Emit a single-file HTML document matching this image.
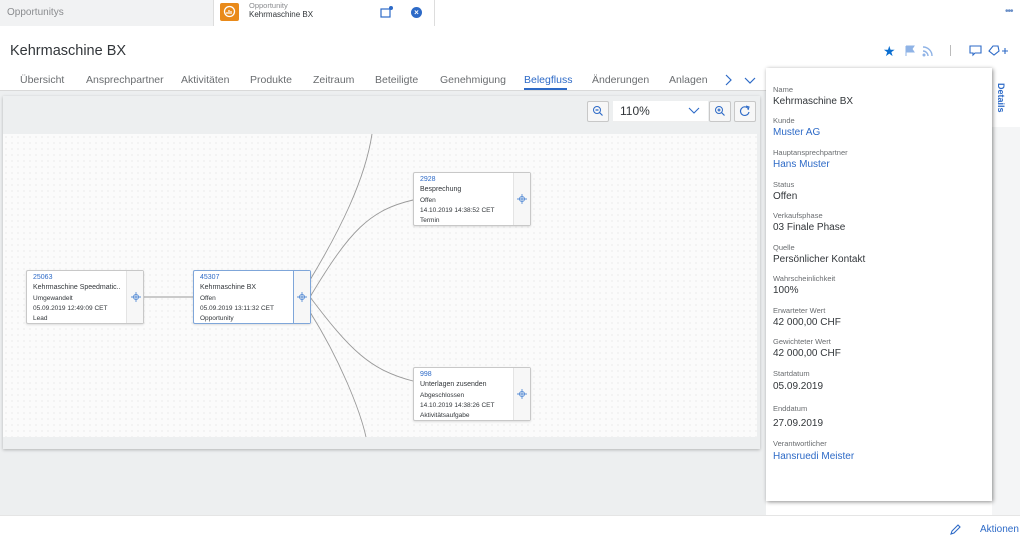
<!DOCTYPE html>
<html><head><meta charset="utf-8"><style>
*{margin:0;padding:0;box-sizing:border-box}
body{width:1020px;height:542px;overflow:hidden;background:#fff;font-family:"Liberation Sans",Arial,sans-serif;position:relative;color:#32363a}
.a{position:absolute;white-space:nowrap}
.tab{position:absolute;top:74px;font-size:10.5px;color:#6a6d70}
.node{position:absolute;width:118px;height:54px;background:#fff;border:1px solid #c8c8c8;border-radius:2px;box-shadow:0 1px 2px rgba(0,0,0,.12)}
.node .side{position:absolute;right:0;top:0;bottom:0;width:17px;background:#f7f7f7;border-left:1px solid #e4e4e4}
.node .t{position:absolute;left:6px;font-size:6.5px;color:#32363a;white-space:nowrap}
.lbl{position:absolute;left:773px;font-size:7.5px;color:#6a6d70}
.val{position:absolute;left:773px;font-size:10px;color:#32363a}
.lnk{color:#2d6ac7}
.btn{position:absolute;top:101px;width:22px;height:21px;background:#f7f7f7;border:1px solid #c8c8c8;border-radius:2px}
</style></head><body>
<!-- top shell bar -->
<div class="a" style="left:0;top:0;width:213px;height:26px;background:#f1f2f3"></div>
<div class="a" style="left:7px;top:7px;font-size:10px;color:#8a8c8f">Opportunitys</div>
<div class="a" style="left:213px;top:0;width:222px;height:26px;background:#fff;border-left:1px solid #ddd;border-right:1px solid #ddd"></div>
<div class="a" style="left:220px;top:3px;width:19px;height:18px;background:#e98a1a;border-radius:2px"></div>
<svg class="a" style="left:223px;top:5px" width="13" height="13" viewBox="0 0 13 13"><circle cx="6.5" cy="6.5" r="5" fill="none" stroke="#fff" stroke-width="1.3"/><path d="M4 9V7M6 9V5M8 9V6" stroke="#fff" stroke-width="1.2"/></svg>
<div class="a" style="left:249px;top:1px;font-size:7.5px;color:#8a8c8f">Opportunity</div>
<div class="a" style="left:249px;top:10px;font-size:8px;color:#32363a">Kehrmaschine BX</div>
<svg class="a" style="left:380px;top:5px" width="14" height="14" viewBox="0 0 14 14"><rect x="1" y="4" width="9" height="8" fill="none" stroke="#2d6ac7" stroke-width="1.2"/><circle cx="11" cy="3" r="2" fill="#2d6ac7"/></svg>
<div class="a" style="left:411px;top:7px;width:11px;height:11px;border-radius:50%;background:#2d6ac7;color:#fff;font-size:8px;line-height:11px;text-align:center;font-weight:bold">×</div>
<div class="a" style="left:1005px;top:6px;font-size:10px;color:#6a8fc7;letter-spacing:-1px">•••</div>
<!-- header -->
<div class="a" style="left:10px;top:43px;font-size:14.5px;color:#32363a">Kehrmaschine BX</div>
<div class="a" style="left:883px;top:43px;font-size:14px;color:#0a6ed1">★</div>
<svg class="a" style="left:904px;top:45px" width="12" height="12" viewBox="0 0 12 12"><path d="M2 1V11M2 1H10L8 4L10 7H2" fill="#8fb3e6" stroke="#8fb3e6"/></svg>
<svg class="a" style="left:922px;top:45px" width="12" height="12" viewBox="0 0 12 12"><circle cx="2" cy="10" r="1.5" fill="#8fb3e6"/><path d="M1 6A5 5 0 0 1 6 11M1 2A9 9 0 0 1 10 11" fill="none" stroke="#8fb3e6" stroke-width="1.4"/></svg>
<div class="a" style="left:950px;top:45px;width:1px;height:11px;background:#bbb"></div>
<svg class="a" style="left:969px;top:45px" width="13" height="12" viewBox="0 0 13 12"><path d="M1 1H12V8H6L4 10V8H1Z" fill="none" stroke="#2d6ac7" stroke-width="1.1"/></svg>
<svg class="a" style="left:988px;top:45px" width="22" height="12" viewBox="0 0 22 12"><path d="M1 6L5 1H10L11 6L6 10Z" fill="none" stroke="#2d6ac7" stroke-width="1.1"/><path d="M17 3V9M14 6H20" stroke="#2d6ac7" stroke-width="1.1"/></svg>
<!-- tabs -->
<div class="tab" style="left:20px">Übersicht</div>
<div class="tab" style="left:86px">Ansprechpartner</div>
<div class="tab" style="left:181px">Aktivitäten</div>
<div class="tab" style="left:250px">Produkte</div>
<div class="tab" style="left:313px">Zeitraum</div>
<div class="tab" style="left:375px">Beteiligte</div>
<div class="tab" style="left:440px">Genehmigung</div>
<div class="tab" style="left:524px;color:#2d6ac7">Belegfluss</div>
<div class="a" style="left:524px;top:88px;width:43px;height:2px;background:#2d6ac7"></div>
<div class="tab" style="left:592px">Änderungen</div>
<div class="tab" style="left:669px">Anlagen</div>
<svg class="a" style="left:723px;top:74px" width="36" height="12" viewBox="0 0 36 12"><path d="M3 1L8 6L3 11" fill="none" stroke="#2d6ac7" stroke-width="1.2"/><path d="M22 4L27 9L32 4" fill="none" stroke="#2d6ac7" stroke-width="1.2"/></svg>
<!-- content bg -->
<div class="a" style="left:0;top:90px;width:766px;height:425px;background:#edeff0;border-top:1px solid #d9d9d9"></div>
<div class="a" style="left:992px;top:127px;width:28px;height:388px;background:#f4f5f6"></div>
<!-- graph card -->
<div class="a" style="left:3px;top:96px;width:757px;height:353px;background:#edeff0;box-shadow:0 1px 3px rgba(0,0,0,.25)"></div>
<div class="a" style="left:3px;top:134px;width:754px;height:303px;background-color:#fbfbfb;background-image:radial-gradient(#dedede 0.6px,transparent 0.8px);background-size:6px 6px"></div>
<!-- toolbar -->
<div class="btn" style="left:587px"></div>
<svg class="a" style="left:592px;top:105px" width="12" height="12" viewBox="0 0 12 12"><circle cx="5" cy="5" r="3.5" fill="none" stroke="#2d6ac7"/><path d="M3.5 5H6.5M7.5 7.5L10.5 10.5" stroke="#2d6ac7" stroke-width="1.2"/></svg>
<div class="a" style="left:613px;top:101px;width:95px;height:21px;background:#fff;border-bottom:1px solid #eee"></div>
<div class="a" style="left:620px;top:104px;font-size:12px;color:#32363a">110%</div>
<svg class="a" style="left:688px;top:107px" width="12" height="8" viewBox="0 0 12 8"><path d="M1 1L6 6L11 1" fill="none" stroke="#2d6ac7" stroke-width="1.1"/></svg>
<div class="btn" style="left:709px"></div>
<svg class="a" style="left:714px;top:105px" width="12" height="12" viewBox="0 0 12 12"><circle cx="5" cy="5" r="3.5" fill="none" stroke="#2d6ac7"/><path d="M3.5 5H6.5M5 3.5V6.5M7.5 7.5L10.5 10.5" stroke="#2d6ac7" stroke-width="1.2"/></svg>
<div class="btn" style="left:734px"></div>
<svg class="a" style="left:739px;top:105px" width="12" height="12" viewBox="0 0 12 12"><path d="M9.5 4A4.3 4.3 0 1 0 10 7" fill="none" stroke="#2d6ac7" stroke-width="1.1"/><path d="M7 1L10 2L9 5" fill="none" stroke="#2d6ac7" stroke-width="1.1"/></svg>
<!-- lines -->
<svg class="a" style="left:0;top:0" width="760" height="450">
<g fill="none" stroke="#9a9a9a" stroke-width="0.9">
<path d="M144 297H193"/>
<path d="M310 297C350 230 370 210 413 200"/>
<path d="M310 297C350 350 370 370 413 381"/>
<path d="M310 280C340 230 365 180 372 134"/>
<path d="M310 312C340 360 360 410 366 437"/>
</g></svg>
<!-- nodes -->
<div class="node" style="left:26px;top:270px"><div class="side"></div>
<div class="t" style="top:3px;color:#2d6ac7;font-size:7px">25063</div>
<div class="t" style="top:13px;font-size:7px">Kehrmaschine Speedmatic..</div>
<div class="t" style="top:24px">Umgewandelt</div>
<div class="t" style="top:34px">05.09.2019 12:49:09 CET</div>
<div class="t" style="top:44px">Lead</div></div>
<div class="node" style="left:193px;top:270px;border-color:#7fa6d9"><div class="side" style="border-left-color:#7fa6d9"></div>
<div class="t" style="top:3px;color:#2d6ac7;font-size:7px">45307</div>
<div class="t" style="top:13px;font-size:7px">Kehrmaschine BX</div>
<div class="t" style="top:24px">Offen</div>
<div class="t" style="top:34px">05.09.2019 13:11:32 CET</div>
<div class="t" style="top:44px">Opportunity</div></div>
<div class="node" style="left:413px;top:172px"><div class="side"></div>
<div class="t" style="top:3px;color:#2d6ac7;font-size:7px">2928</div>
<div class="t" style="top:13px;font-size:7px">Besprechung</div>
<div class="t" style="top:24px">Offen</div>
<div class="t" style="top:34px">14.10.2019 14:38:52 CET</div>
<div class="t" style="top:44px">Termin</div></div>
<div class="node" style="left:413px;top:367px"><div class="side"></div>
<div class="t" style="top:3px;color:#2d6ac7;font-size:7px">998</div>
<div class="t" style="top:13px;font-size:7px">Unterlagen zusenden</div>
<div class="t" style="top:24px">Abgeschlossen</div>
<div class="t" style="top:34px">14.10.2019 14:38:26 CET</div>
<div class="t" style="top:44px">Aktivitätsaufgabe</div></div>
<svg class="a" style="left:0;top:0" width="560" height="450"><g fill="none" stroke="#5b8fd6" stroke-width="0.9">
<circle cx="136" cy="297" r="2.6"/><path d="M131 297H141M136 292V302"/>
<circle cx="302" cy="297" r="2.6"/><path d="M297 297H307M302 292V302"/>
<circle cx="522" cy="199" r="2.6"/><path d="M517 199H527M522 194V204"/>
<circle cx="522" cy="394" r="2.6"/><path d="M517 394H527M522 389V399"/></g></svg>
<!-- side panel -->
<div class="a" style="left:766px;top:68px;width:226px;height:433px;background:#fff;box-shadow:1px 1px 4px rgba(0,0,0,.45)"></div>
<div class="a" style="left:996px;top:83px;font-size:9px;color:#2d6ac7;font-weight:bold;writing-mode:vertical-rl">Details</div>
<div class="lbl" style="top:85px">Name</div><div class="val" style="top:96px">Kehrmaschine BX</div>
<div class="lbl" style="top:116px">Kunde</div><div class="val lnk" style="top:127px">Muster AG</div>
<div class="lbl" style="top:148px">Hauptansprechpartner</div><div class="val lnk" style="top:159px">Hans Muster</div>
<div class="lbl" style="top:180px">Status</div><div class="val" style="top:191px">Offen</div>
<div class="lbl" style="top:211px">Verkaufsphase</div><div class="val" style="top:222px">03 Finale Phase</div>
<div class="lbl" style="top:243px">Quelle</div><div class="val" style="top:254px">Persönlicher Kontakt</div>
<div class="lbl" style="top:274px">Wahrscheinlichkeit</div><div class="val" style="top:285px">100%</div>
<div class="lbl" style="top:306px">Erwarteter Wert</div><div class="val" style="top:317px">42 000,00 CHF</div>
<div class="lbl" style="top:337px">Gewichteter Wert</div><div class="val" style="top:348px">42 000,00 CHF</div>
<div class="lbl" style="top:369px">Startdatum</div><div class="val" style="top:381px">05.09.2019</div>
<div class="lbl" style="top:404px">Enddatum</div><div class="val" style="top:418px">27.09.2019</div>
<div class="lbl" style="top:439px">Verantwortlicher</div><div class="val lnk" style="top:451px">Hansruedi Meister</div>
<!-- footer -->
<div class="a" style="left:0;top:515px;width:1020px;height:27px;background:#fff;border-top:1px solid #e5e5e5"></div>
<svg class="a" style="left:949px;top:524px" width="12" height="12" viewBox="0 0 12 12"><path d="M2 10L3 7L9 1L11 3L5 9Z" fill="none" stroke="#2d6ac7" stroke-width="1.1"/></svg>
<div class="a" style="left:980px;top:524px;font-size:10px;color:#2d6ac7">Aktionen</div>
</body></html>
